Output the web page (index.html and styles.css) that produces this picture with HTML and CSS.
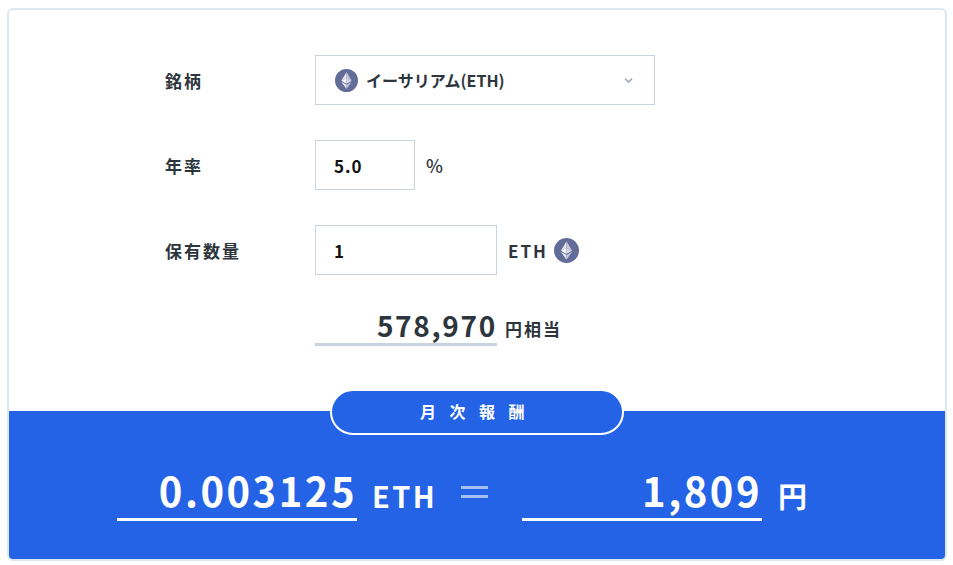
FILE: index.html
```html
<!DOCTYPE html>
<html lang="ja">
<head>
    <meta charset="UTF-8">
    <meta name="viewport" content="width=device-width, initial-scale=1.0">
    <title>月次報酬</title>
    <link rel="stylesheet" href="styles.css">
</head>
<body>
    <div class="card">
        <div class="form">
            <div class="row">
                <div class="label">銘柄</div>
                <div class="select">
                    <svg class="eth-icon" viewBox="0 0 24 24"><use href="#eth"></use></svg>
                    <span class="select-text">イーサリアム(ETH)</span>
                    <svg class="chevron" viewBox="0 0 10 7"><path d="M1.2 1.5 5 5.2l3.8-3.7" fill="none" stroke="#a3afbb" stroke-width="2"/></svg>
                </div>
            </div>
            <div class="row">
                <div class="label">年率</div>
                <div class="input input-rate">5.0</div>
                <span class="unit unit-rate">%</span>
            </div>
            <div class="row">
                <div class="label">保有数量</div>
                <div class="input input-amount">1</div>
                <span class="unit">ETH</span>
                <svg class="eth-icon eth-icon-unit" viewBox="0 0 24 24"><use href="#eth"></use></svg>
            </div>
            <div class="row row-total">
                <div class="label"></div>
                <div class="total">578,970</div>
                <span class="total-unit">円相当</span>
            </div>
        </div>
        <div class="result">
            <div class="pill">月次報酬</div>
            <div class="result-row">
                <div class="result-value result-eth">0.003125</div>
                <span class="result-unit result-unit-eth">ETH</span>
                <span class="equals"></span>
                <div class="result-value">1,809</div>
                <span class="result-unit result-unit-yen">円</span>
            </div>
        </div>
    </div>

    <svg class="defs" width="0" height="0">
        <symbol id="eth" viewBox="0 0 24 24">
            <circle cx="12" cy="12" r="12" fill="#636b98"/>
            <path d="M12 3.2 6.6 12.2 12 9.8z" fill="#e4e5ee"/>
            <path d="M12 3.2 17.4 12.2 12 9.8z" fill="#c4c7da"/>
            <path d="M6.6 12.2 12 15.3V9.8z" fill="#f8f8fb"/>
            <path d="M17.4 12.2 12 15.3V9.8z" fill="#d6d8e6"/>
            <path d="M6.6 13.3 12 20.8v-4.4z" fill="#eeeff5"/>
            <path d="M17.4 13.3 12 20.8v-4.4z" fill="#c4c7da"/>
        </symbol>
    </svg>
</body>
</html>
```

FILE: styles.css
```css
html, body {
    margin: 0;
    padding: 0;
}
body {
    padding: 8px 6px 4px 7px;
    background: #fff;
    color: #2d353d;
    font-family: "Noto Sans CJK JP", "Noto Sans", sans-serif;
    font-weight: 700;
}
.card {
    border: 2px solid #dde7ef;
    border-radius: 6px;
    overflow: hidden;
}
.form {
    padding: 45px 0 0 156px;
    height: 401px;
    box-sizing: border-box;
}
.row {
    display: flex;
    align-items: center;
    height: 50px;
    margin-bottom: 35px;
}
.label {
    width: 150px;
    font-size: 17px;
    letter-spacing: 2px;
}
.select,
.input {
    box-sizing: border-box;
    height: 50px;
    border: 1px solid #c8d4df;
    display: flex;
    align-items: center;
}
.select {
    width: 340px;
    padding: 0 21px 0 19px;
}
.select-text {
    flex: 1;
    margin-left: 8px;
    font-size: 16px;
}
.eth-icon {
    width: 23px;
    height: 23px;
}
.eth-icon-unit {
    width: 25px;
    height: 25px;
    margin-left: 6px;
}
.chevron {
    width: 9px;
    height: 7px;
}
.input {
    padding-left: 18px;
    font-size: 17px;
    color: #111;
    letter-spacing: 1px;
}
.input-rate {
    width: 100px;
}
.input-amount {
    width: 182px;
}
.unit {
    margin-left: 11px;
    font-size: 17px;
    letter-spacing: 2px;
}
.unit-rate {
    font-size: 18px;
    font-weight: 500;
}
.row-total {
    margin-bottom: 0;
    height: 36px;
    align-items: flex-start;
}
.total {
    box-sizing: border-box;
    width: 182px;
    height: 36px;
    border-bottom: 3px solid #c8d4df;
    text-align: right;
    font-size: 28px;
    line-height: 30px;
    letter-spacing: 1.7px;
}
.total-unit {
    margin-left: 8px;
    margin-top: 6px;
    font-size: 17px;
    letter-spacing: 2px;
}
.result {
    position: relative;
    height: 148px;
    background: #2563e6;
    color: #fff;
}
.pill {
    position: absolute;
    top: -22px;
    left: 321px;
    box-sizing: border-box;
    width: 294px;
    height: 46px;
    padding-left: 4px;
    border: 2px solid #fff;
    border-radius: 23px;
    background: #2563e6;
    text-align: center;
    font-size: 16px;
    line-height: 41px;
    letter-spacing: 13.5px;
}
.result-row {
    display: flex;
    align-items: flex-start;
    padding: 54px 0 0 108px;
}
.result-value {
    box-sizing: border-box;
    width: 240px;
    height: 56px;
    border-bottom: 3px solid #fff;
    text-align: right;
    font-size: 40px;
    line-height: 51px;
    letter-spacing: 2.5px;
}
.result-unit {
    font-size: 29px;
    line-height: 60px;
}
.result-unit-eth {
    margin-left: 15px;
    width: 64px;
    letter-spacing: 2.4px;
}
.result-unit-yen {
    margin-left: 16px;
}
.equals {
    width: 27px;
    height: 6px;
    margin: 21px 34px 0 25px;
    border-top: 3px solid #a4bff6;
    border-bottom: 3px solid #a4bff6;
}
.defs {
    position: absolute;
}
```
